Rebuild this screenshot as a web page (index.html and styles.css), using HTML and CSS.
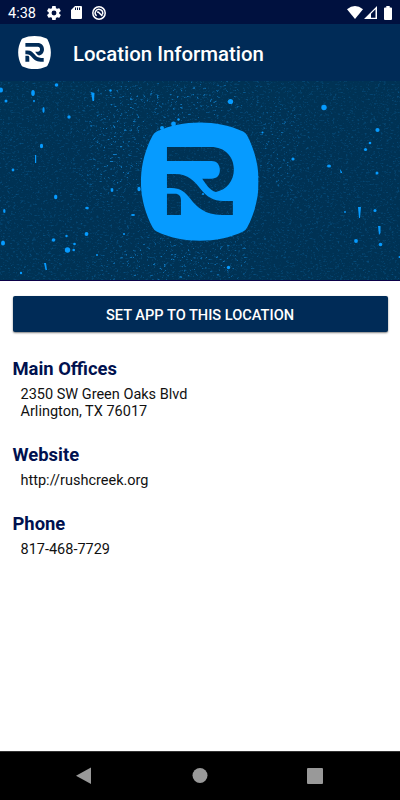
FILE: index.html
```html
<!DOCTYPE html>
<html lang="en">
<head>
  <meta charset="UTF-8"/>
  <title>Location Information</title>
  <link rel="stylesheet" href="styles.css">
</head>
<body>
<svg class="defs" width="0" height="0">
  <symbol id="logo" viewBox="33 21 353 357">
    <path fill-rule="evenodd" d="M80 49C158 13 262 13 340 49Q348 53 352 61C398 150 398 250 352 338Q348 346 340 350C262 387 158 387 80 350Q72 346 68 338C21 250 21 150 68 61Q72 53 80 49Z
      M111 96V138H245C260 138 270 148 270 165C270 182 260 191 245 191H217C229 208 239 226 258 231C290 225 312 198 312 163C312 125 285 96 243 96Z
      M111 177V219H125C150 219 165 230 182 252C200 275 225 300 275 300H309V258H280C250 258 230 245 212 222C195 200 175 177 135 177Z
      M111 236V300H153V255C153 243 147 236 135 236Z"/>
  </symbol>
</svg>
<div class="status">
  <span class="clock">4:38</span>
  <svg class="gear" width="14" height="14" viewBox="2 2 20 20"><path fill-rule="evenodd" d="M19.4 13c.1-.3.1-.6.1-1s0-.7-.1-1l2.1-1.600c.2-.2.3-.5.1-.7l-2-3.400c-.1-.2-.4-.3-.6-.2l-2.500 1c-.5-.4-1.100-.7-1.700-1l-.4-2.600c0-.3-.2-.5-.5-.5h-4c-.2 0-.4.200-.5.400L9 5.100c-.6.200-1.100.600-1.700 1l-2.500-1c-.2-.1-.5 0-.6.200l-2 3.400c-.1.200 0 .5.200.7L4.500 11c0 .3-.1.600-.1 1s0 .7.100 1l-2.100 1.600c-.2.200-.3.500-.2.700l2 3.400c.1.200.4.300.6.200l2.500-1c.5.4 1.100.7 1.700 1l.4 2.700c0 .2.200.4.500.4h4c.3 0 .5-.2.5-.4l.4-2.700c.6-.2 1.100-.6 1.700-1l2.500 1c.2.1.5 0 .6-.2l2-3.400c.1-.2.1-.5-.1-.7ZM12 8.500a3.500 3.500 0 1 0 0 7a3.500 3.500 0 0 0 0-7Z"/></svg>
  <svg class="sd" width="11" height="13" viewBox="0 0 11 13"><path d="M4 0H10Q11 0 11 1V12Q11 13 10 13H1Q0 13 0 12V4Z"/><path class="slots" d="M4.500 1.500V4M6.500 1.500V4M8.500 1.500V4"/></svg>
  <svg class="badge" width="14" height="14" viewBox="0 0 14 14"><circle cx="7" cy="7" r="6.200"/><path d="M4.600 9.900A3.700 3.700 0 1 1 10.300 8.600M5 6.300Q6.300 5.600 7.300 7L10.300 10"/></svg>
  <span class="space"></span>
  <svg width="16" height="13" viewBox="0 0 16 13"><path d="M0 3.200Q8-3 16 3.200L8 13Z"/></svg>
  <svg class="signal" width="13" height="13" viewBox="0 0 13 13"><path fill-rule="evenodd" d="M0 13L13 0V13ZM7 7.700V11.700H11.500V3.200Z"/></svg>
  <svg class="battery" width="8" height="14" viewBox="0 0 8 14"><path d="M2.300 0H5.700V1.500H7Q8 1.500 8 2.500V13Q8 14 7 14H1Q0 14 0 13V2.500Q0 1.500 1 1.500H2.300Z"/></svg>
</div>
<header class="appbar">
  <svg class="mark" width="33" height="33"><use href="#logo"/></svg>
  <h1>Location Information</h1>
</header>
<div class="banner">
  <svg width="400" height="200" viewBox="0 0 400 200">
    <defs>
      <filter id="grain" x="0" y="0" width="100%" height="100%" color-interpolation-filters="sRGB">
        <feTurbulence type="fractalNoise" baseFrequency=".3 .45" numOctaves="3" seed="7"/>
        <feColorMatrix values="0 0 0 0 .06  0 0 0 0 .5  0 0 0 0 .8  7 0 0 0 -4.500"/>
      </filter>
      <filter id="dust" x="0" y="0" width="100%" height="100%" color-interpolation-filters="sRGB">
        <feTurbulence type="fractalNoise" baseFrequency=".37 .61" numOctaves="2" seed="3"/>
        <feColorMatrix values="0 0 0 0 .06  0 0 0 0 .42  0 0 0 0 .66  5 0 0 0 -2.950"/>
      </filter>
      <filter id="soft" x="-50%" y="-50%" width="200%" height="200%"><feGaussianBlur stdDeviation="14"/></filter>
      <mask id="worn">
        <rect width="400" height="200" fill="#333"/>
        <g fill="#fff" filter="url(#soft)">
          <ellipse cx="115" cy="60" rx="26" ry="60"/>
          <ellipse cx="160" cy="182" rx="60" ry="22"/>
          <ellipse cx="180" cy="20" rx="75" ry="18"/>
          <ellipse cx="280" cy="65" rx="14" ry="50"/>
          <ellipse cx="225" cy="175" rx="30" ry="20"/>
        </g>
      </mask>
    </defs>
    <rect width="400" height="200" filter="url(#dust)" opacity=".35"/>
    <g mask="url(#worn)"><rect width="400" height="200" filter="url(#grain)"/></g>
    <g class="specks">
      <ellipse cx="1" cy="9" rx="2" ry="2.500"/>
      <ellipse cx="33" cy="12" rx="1.800" ry="3"/>
      <circle cx="56.500" cy="4" r="1.800"/>
      <circle cx="6" cy="20" r="1.500"/>
      <circle cx="34" cy="20" r="1"/>
      <ellipse cx="43.500" cy="29" rx="1.100" ry="3"/>
      <path d="M91 11L94.500 12L94 20H92.500Z"/>
      <circle cx="110.500" cy="9.500" r="1.200"/>
      <circle cx="69" cy="36" r="1.700"/>
      <ellipse cx="41.500" cy="65" rx="1.600" ry="2.200"/>
      <path d="M35 74H36.200V82H35Z"/>
      <circle cx="13" cy="89" r="1.400"/>
      <ellipse cx="55.700" cy="116" rx="1.700" ry="2.200"/>
      <ellipse cx="112" cy="109" rx="1.400" ry="2"/>
      <ellipse cx="139" cy="108" rx="1.600" ry="2.300"/>
      <ellipse cx="4.300" cy="130" rx="1.200" ry="2"/>
      <ellipse cx="87" cy="127" rx="1.800" ry="1.200"/>
      <ellipse cx="133" cy="134" rx="2" ry="1"/>
      <circle cx="86.500" cy="153" r="1.900"/>
      <circle cx="66.500" cy="155" r="1.200"/>
      <circle cx="53.500" cy="159" r="1.800"/>
      <ellipse cx="3" cy="162" rx="2" ry="2.500"/>
      <circle cx="67.500" cy="169" r="2.700"/>
      <circle cx="74.500" cy="163" r="1.300"/>
      <circle cx="73.700" cy="169" r="1.300"/>
      <path d="M44 182H46L47 189H45.500Z"/>
      <circle cx="21" cy="192" r="1.200"/>
      <circle cx="124" cy="153" r="1"/>
      <circle cx="97" cy="174" r="1"/>
      <circle cx="162" cy="47" r="2"/>
      <circle cx="173.500" cy="43" r="2.400"/>
      <circle cx="178.500" cy="38.500" r="1.200"/>
      <circle cx="230.500" cy="20.500" r="2.600"/>
      <circle cx="228.500" cy="186.500" r="1.700"/>
      <circle cx="324" cy="26.500" r="2.700"/>
      <circle cx="377.500" cy="49" r="2.100"/>
      <circle cx="370" cy="62" r="1.300"/>
      <circle cx="365.500" cy="68.500" r="1.600"/>
      <circle cx="293" cy="78" r="1.600"/>
      <ellipse cx="329" cy="85" rx="2" ry="1.500"/>
      <path d="M340 88L342 91V92H340.500Z"/>
      <circle cx="377" cy="92" r="1.500"/>
      <path d="M358 126H361L360 137H359Z"/>
      <circle cx="375" cy="129.500" r="1.500"/>
      <path d="M378 145H380.500V152L379 154Z"/>
      <circle cx="356" cy="160" r="1.900"/>
      <circle cx="380.500" cy="163.500" r="1.800"/>
      <circle cx="345" cy="131" r=".9"/>
      <circle cx="262.500" cy="51.500" r="1"/>
      <circle cx="203" cy="113" r="1"/>
      <circle cx="399.500" cy="176" r="1"/>
    </g>
    <use class="emblem" href="#logo" x="141" y="41" width="117.500" height="119"/>
  </svg>
</div>
<main>
  <button type="button">SET APP TO THIS LOCATION</button>
  <h2>Main Offices</h2>
  <p>2350 SW Green Oaks Blvd<br>Arlington, TX 76017</p>
  <h2>Website</h2>
  <p>http://rushcreek.org</p>
  <h2>Phone</h2>
  <p>817-468-7729</p>
</main>
<nav>
  <svg width="400" height="48" viewBox="0 0 400 48">
    <path d="M91 15.500V32L76 23.700Z"/>
    <circle cx="200" cy="23.500" r="7.500"/>
    <rect x="307" y="16" width="16" height="16" rx="1"/>
  </svg>
</nav>
</body>
</html>
```

FILE: styles.css
```css
body {
  margin: 0;
  height: 800px;
  display: flex;
  flex-direction: column;
  overflow: hidden;
  font-family: Roboto, sans-serif;
  background: #fff;
}
svg {
  display: block;
  flex: none;
}
.defs { position: absolute; }
.status {
  height: 24px;
  display: flex;
  align-items: center;
  box-sizing: border-box;
  padding: 1px 8px 0;
  background: #00113f;
  color: #fff;
  fill: #fff;
}
.clock {
  width: 39px;
  font-size: 14.500px;
  line-height: 17px;
  padding-top: 1px;
}
.sd { margin: 0 10px; }
.slots { stroke: #00113f; }
.badge {
  fill: none;
  stroke: #fff;
  stroke-width: 1.500;
}
.space { flex: 1; }
.signal { margin: 0 7px 0 1px; }
.appbar {
  height: 57px;
  display: flex;
  align-items: center;
  box-sizing: border-box;
  padding: 0 18px;
  background: #002b57;
  color: #fff;
  fill: #fff;
}
.appbar h1 {
  margin: 3px 0 0 22px;
  font-size: 20.400px;
  font-weight: 500;
}
.banner {
  height: 200px;
  background: #003254;
  border-bottom: 1px solid #0c0048;
  box-sizing: border-box;
  overflow: hidden;
}
.specks, .emblem { fill: #069bff; }
main {
  flex: 1;
  padding: 15px 12.500px 0;
  color: #111;
}
button {
  display: block;
  width: 100%;
  height: 36px;
  margin-bottom: 24px;
  padding: 2px 0 0;
  border: 0;
  border-radius: 2px;
  background: #002b57;
  box-shadow: 0 1px 2px rgba(0, 0, 0, .5);
  color: #fff;
  font: 500 14.600px Roboto, sans-serif;
}
h2 {
  margin: 0;
  font-size: 18.400px;
  line-height: 25px;
  font-weight: 700;
  color: #00114f;
}
p {
  margin: 5px 8px 22px;
  font-size: 14.500px;
  line-height: 17px;
}
nav {
  height: 48px;
  border-top: 1px solid #333;
  background: #000;
  fill: #999;
}
```
